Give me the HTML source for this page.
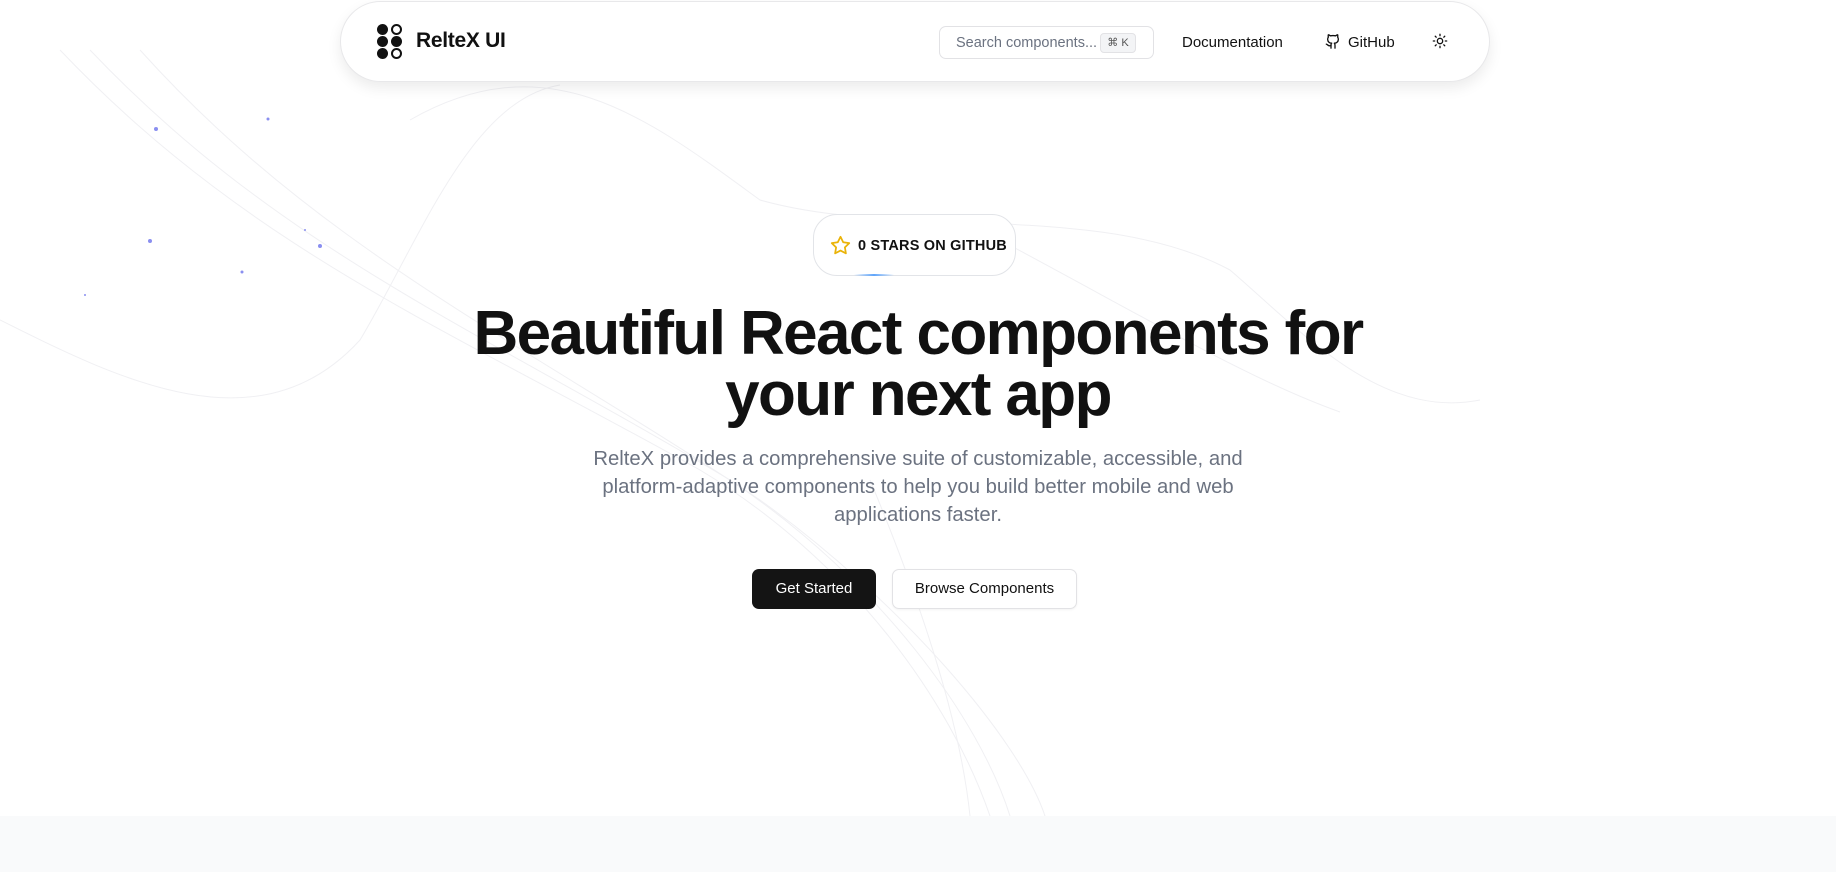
<!DOCTYPE html>
<html><head><meta charset="utf-8"><style>
*{margin:0;padding:0;box-sizing:border-box}
body{width:1836px;height:872px;overflow:hidden;background:#fff;font-family:"Liberation Sans",sans-serif;position:relative;color:#111}
.bg{position:absolute;left:0;top:0}
.bottom{position:absolute;left:0;top:816px;width:1836px;height:56px;background:#f9fafb}
.nav{position:absolute;left:340px;top:1px;width:1150px;height:81px;border-radius:41px;background:#fff;border:1px solid #e8e8ea;box-shadow:0 6px 14px rgba(0,0,0,.08)}
.logo{position:absolute;left:377px;top:24px;width:26px;height:36px}
.logo span{position:absolute;width:11px;height:11px;border-radius:50%;background:#111}
.logo span.r{background:#fff;border:2.5px solid #111}
.brand{position:absolute;left:416px;top:29px;font-size:21px;font-weight:bold;letter-spacing:-0.3px}
.search{position:absolute;left:939px;top:26px;width:215px;height:33px;border:1px solid #e2e2e5;border-radius:7px;font-size:14.5px;color:#6b7280;padding:8px 0 0 16px}
.kbd{position:absolute;left:160px;top:6px;width:36px;height:20px;background:#f3f4f6;border:1px solid #e2e2e5;border-radius:4px;font-size:11px;color:#555;text-align:center;line-height:18px}
.link{position:absolute;top:34px;font-size:15px;color:#111}
.badge{position:absolute;left:813px;top:214px;width:203px;height:62px;border:1px solid #e2e4e8;border-radius:24px;background:#fff;font-size:14.5px;font-weight:bold;letter-spacing:.2px;padding:23px 0 0 44px}
h1{position:absolute;left:0;width:1836px;top:303px;text-align:center;font-size:62px;line-height:61px;font-weight:bold;letter-spacing:-1.6px;color:#111}
p{position:absolute;left:0;width:1836px;top:445px;text-align:center;font-size:20.3px;line-height:28px;color:#6b7280}
.btn{position:absolute;top:569px;height:40px;border-radius:7px;font-size:15px;text-align:center;line-height:40px}
</style></head><body>
<svg class="bg" width="1836" height="872" fill="none" stroke="#f0f0f3" stroke-width="1">
<path d="M60 50 C250 250 450 330 700 470 C850 560 950 700 990 816"/>
<path d="M90 50 C280 250 480 330 730 480 C880 580 980 720 1010 816"/>
<path d="M140 50 C320 250 520 340 760 500 C900 600 1020 740 1045 816"/>
<path d="M0 320 C120 380 260 450 360 340 C420 240 470 100 560 85"/>
<path d="M410 120 C550 40 650 120 760 200 C900 240 1100 200 1230 270 C1300 330 1380 420 1480 400"/>
<path d="M1000 240 C1150 320 1250 380 1340 412"/>
<path d="M870 480 C920 600 960 720 970 816"/>
</svg>
<svg class="bg" width="400" height="320" fill="#8a8ff0">
<circle cx="156" cy="129" r="2"/><circle cx="268" cy="119" r="1.5"/><circle cx="150" cy="241" r="2"/><circle cx="320" cy="246" r="2"/><circle cx="242" cy="272" r="1.5"/><circle cx="85" cy="295" r="1"/><circle cx="305" cy="230" r="1"/>
</svg>
<div class="bottom"></div>
<div class="nav"></div>
<div class="logo"><span style="left:0;top:0"></span><span class="r" style="left:14px;top:0"></span><span style="left:0;top:12px"></span><span style="left:14px;top:12px"></span><span style="left:0;top:24px"></span><span class="r" style="left:14px;top:24px"></span></div>
<div class="brand">RelteX UI</div>
<div class="search">Search components...<div class="kbd">⌘ K</div></div>
<div class="link" style="left:1182px">Documentation</div>
<svg style="position:absolute;left:1325px;top:33px" width="16" height="17" viewBox="0 0 24 24" fill="none" stroke="#111" stroke-width="2" stroke-linecap="round" stroke-linejoin="round"><path d="M15 22v-4a4.8 4.8 0 0 0-1-3.5c3 0 6-2 6-5.5.08-1.25-.27-2.48-1-3.5.28-1.150.28-2.35 0-3.5 0 0-1 0-3 1.5-2.64-.5-5.36-.5-8 0C6 2 5 2 5 2c-.3 1.15-.3 2.35 0 3.5A5.4 5.4 0 0 0 4 9c0 3.5 3 5.5 6 5.5-.39.49-.68 1.05-.85 1.65S8.930 17.38 9 18v4"/><path d="M9 18c-4.51 2-5-2-7-2"/></svg>
<div class="link" style="left:1348px">GitHub</div>
<svg style="position:absolute;left:1432px;top:33px" width="16" height="16" viewBox="0 0 24 24" fill="none" stroke="#111" stroke-width="2" stroke-linecap="round"><circle cx="12" cy="12" r="4"/><path d="M12 2v2M12 20v2M4.9 4.9l1.4 1.4M17.7 17.7l1.4 1.4M2 12h2M20 12h2M6.3 17.7l-1.4 1.4M19.1 4.9l-1.4 1.4"/></svg>
<div class="badge">0 STARS ON GITHUB
<svg style="position:absolute;left:16px;top:20px" width="21" height="21" viewBox="0 0 24 24" fill="none" stroke="#eab308" stroke-width="2" stroke-linejoin="round"><path d="M12 2l3.09 6.26L22 9.27l-5 4.87 1.18 6.88L12 17.77l-6.18 3.25L7 14.14 2 9.27l6.91-1.01z"/></svg>
<div style="position:absolute;left:40px;bottom:-1px;width:40px;height:2px;background:linear-gradient(90deg,transparent,#60a5fa,transparent)"></div></div>
<h1>Beautiful React components for<br>your next app</h1>
<p>RelteX provides a comprehensive suite of customizable, accessible, and<br>platform-adaptive components to help you build better mobile and web<br>applications faster.</p>
<div class="btn" style="left:752px;width:124px;background:#141414;color:#fff">Get Started</div>
<div class="btn" style="left:892px;width:185px;background:#fff;border:1px solid #e2e2e5;line-height:38px;box-shadow:0 1px 2px rgba(0,0,0,.05)">Browse Components</div>
</body></html>
